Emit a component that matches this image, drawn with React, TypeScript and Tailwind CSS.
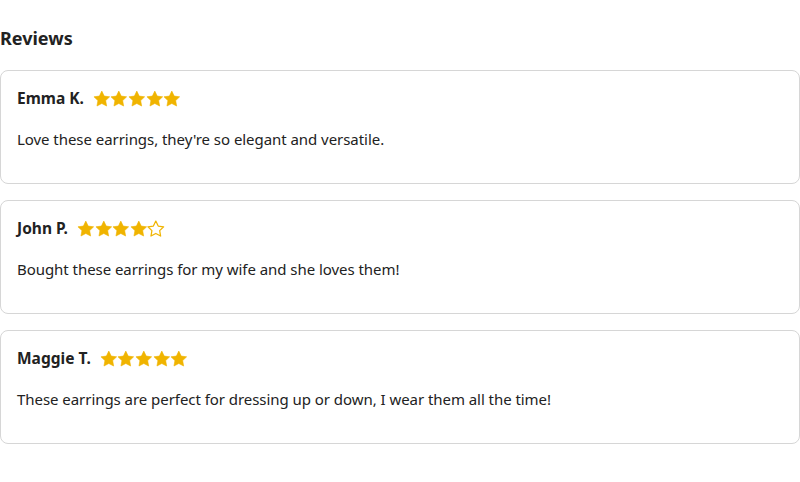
const reviews = [
  { name: 'Emma K.', rating: 5, text: "Love these earrings, they're so elegant and versatile." },
  { name: 'John P.', rating: 4, text: 'Bought these earrings for my wife and she loves them!' },
  { name: 'Maggie T.', rating: 5, text: 'These earrings are perfect for dressing up or down, I wear them all the time!' },
]

function Star({ filled }: { filled: boolean }) {
  return (
    <svg viewBox="0 0 24 24" className="h-[18px] w-[17.6px]">
      <path
        d="M12 1.2l3.3 6.8 7.4 1-5.4 5.2 1.3 7.4L12 18.1l-6.6 3.5 1.3-7.4L1.3 9l7.4-1z"
        fill={filled ? '#f0b400' : 'none'}
        stroke="#f0b400"
        strokeWidth={filled ? 0.8 : 1.7}
        strokeLinejoin="round"
      />
    </svg>
  )
}

export default function App() {
  return (
    <div className="min-h-screen bg-white pt-6 text-[#222] font-['Noto_Sans',sans-serif]">
      <h2 className="mb-[18px] text-lg font-bold leading-7">Reviews</h2>
      <div className="flex flex-col gap-4">
        {reviews.map((r) => (
          <div key={r.name} className="rounded-lg border border-[#d6d6d6] p-4">
            <div className="flex h-6 items-center gap-[9px]">
              <span className="text-[15.5px] font-bold">{r.name}</span>
              <span className="flex">
                {[0, 1, 2, 3, 4].map((i) => (
                  <Star key={i} filled={i < r.rating} />
                ))}
              </span>
            </div>
            <p className="mt-4 mb-4 text-[15px] leading-6 tracking-[-0.05px]">{r.text}</p>
          </div>
        ))}
      </div>
    </div>
  )
}
